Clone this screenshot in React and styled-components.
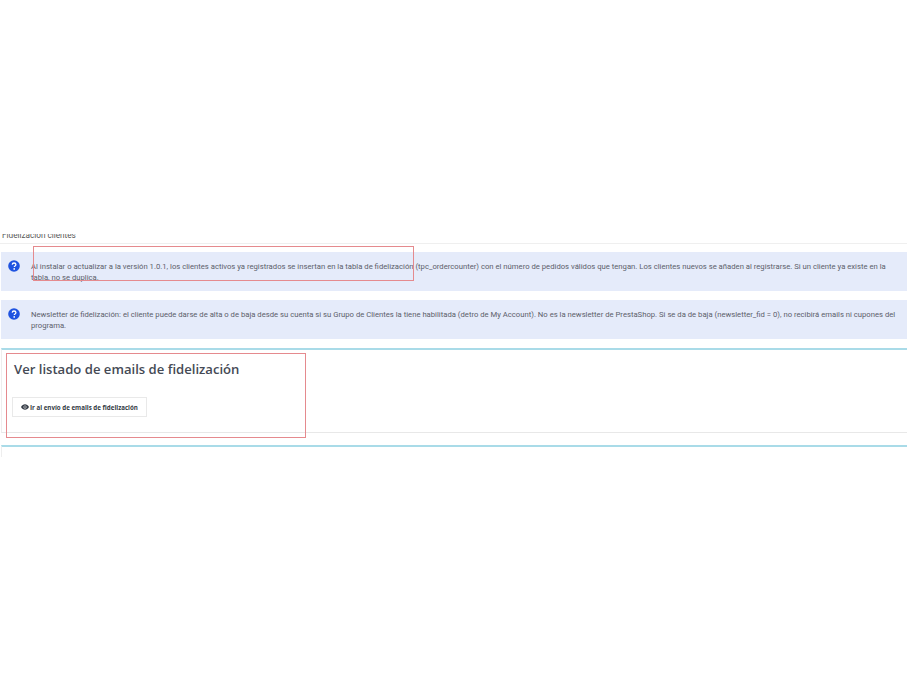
import React from "react";
import styled, { createGlobalStyle } from "styled-components";

const Global = createGlobalStyle`
  html, body { margin: 0; padding: 0; background: #fff; }
  body { font-family: "Roboto", "Liberation Sans", sans-serif; }
`;
const Page = styled.div`
  position: relative;
  width: 907px;
  height: 693px;
  overflow: hidden;
  padding-top: 234px;
  box-sizing: border-box;
`;
const PageTitle = styled.div`
  height: 7px;
  overflow: hidden;
  border-bottom: 1px solid #efefef;
  padding: 0 0 2px 2px;
  font-size: 8.2px;
  line-height: 11px;
  color: #555;
  display: flex;
  align-items: flex-end;
  box-sizing: content-box;
  margin-bottom: 8px;
`;
const TitleText = styled.span`
  display: block;
  flex: none;
  height: 11px;
`;
const Alert = styled.div`
  display: flex;
  height: 39px;
  background: #e5ebfa;
  margin: 0 0 9px 1px;
  box-sizing: border-box;
`;
const IconCell = styled.div`
  width: 30px;
  padding: 8px 0 0 7px;
  box-sizing: border-box;
  flex: none;
  svg { display: block; }
`;
const AlertText = styled.p`
  margin: 0;
  padding: 9px 10px 0 0;
  font-size: 7.7px;
  line-height: 11px;
  color: #5c606a;
`;
const Panel = styled.section`
  border-top: 2px solid #a9dbe8;
  border-left: 1px solid #eeeeee;
  border-bottom: ${(p) => (p.$open ? "none" : "1px solid #e8e8e8")};
  margin-left: 1px;
  height: ${(p) => p.$h}px;
  box-sizing: border-box;
`;
const Heading = styled.h2`
  margin: 0;
  padding: 9px 0 0 12px;
  font-family: "Open Sans", sans-serif;
  font-size: 13.1px;
  line-height: 20px;
  font-weight: 600;
  color: #454a55;
`;
const Button = styled.button`
  display: inline-flex;
  align-items: center;
  gap: 1px;
  margin: 18px 0 0 10px;
  height: 20px;
  width: 135px;
  padding: 0 0 0 8px;
  background: #fff;
  border: 1px solid #e9e9e9;
  font-family: "Open Sans", sans-serif;
  font-weight: 700;
  font-size: 6.2px;
  color: #333a44;
`;
const Gap = styled.div`
  height: 12px;
`;
const Annotation = styled.div`
  position: absolute;
  left: ${(p) => p.$x}px;
  top: ${(p) => p.$y}px;
  width: ${(p) => p.$w}px;
  height: ${(p) => p.$h}px;
  box-sizing: border-box;
  border: 1px solid #e58a8e;
  pointer-events: none;
`;

const Help = () => (
  <svg width="12" height="12" viewBox="0 0 12 12">
    <circle cx="6" cy="6" r="5.8" fill="#1f53e0" />
    <path d="M4.2 4.6C4.3 3.6 5 3 6 3s1.9.6 1.9 1.6c0 .8-.5 1.1-1 1.5-.4.3-.6.5-.6 1" fill="none" stroke="#fff" strokeWidth="1.3" />
    <circle cx="6.2" cy="8.9" r=".85" fill="#fff" />
  </svg>
);
const Eye = () => (
  <svg width="8" height="6" viewBox="0 0 16 12">
    <path d="M0 6c2-3.6 5-5.5 8-5.5s6 1.9 8 5.5c-2 3.6-5 5.5-8 5.5S2 9.6 0 6z" fill="#333a44" />
    <circle cx="8" cy="6" r="3" fill="#fff" />
    <circle cx="8" cy="6" r="1.8" fill="#333a44" />
  </svg>
);

export default function App() {
  return (
    <Page>
      <Global />
      <PageTitle><TitleText>Fidelización clientes</TitleText></PageTitle>
      <Alert>
        <IconCell><Help /></IconCell>
        <AlertText>Al instalar o actualizar a la versión 1.0.1, los clientes activos ya registrados se insertan en la tabla de fidelización (tpc_ordercounter) con el número de pedidos válidos que tengan. Los clientes nuevos se añaden al registrarse. Si un cliente ya existe en la tabla, no se duplica.</AlertText>
      </Alert>
      <Alert>
        <IconCell><Help /></IconCell>
        <AlertText>Newsletter de fidelización: el cliente puede darse de alta o de baja desde su cuenta si su Grupo de Clientes la tiene habilitada (detro de My Account). No es la newsletter de PrestaShop. Si se da de baja (newsletter_fid = 0), no recibirá emails ni cupones del programa.</AlertText>
      </Alert>
      <Panel $h={85}>
        <Heading>Ver listado de emails de fidelización</Heading>
        <Button><Eye />Ir al envío de emails de fidelización</Button>
      </Panel>
      <Gap />
      <Panel $h={12} $open />
      <Annotation $x={33} $y={246} $w={381} $h={35} />
      <Annotation $x={6} $y={353} $w={300} $h={85} />
    </Page>
  );
}
